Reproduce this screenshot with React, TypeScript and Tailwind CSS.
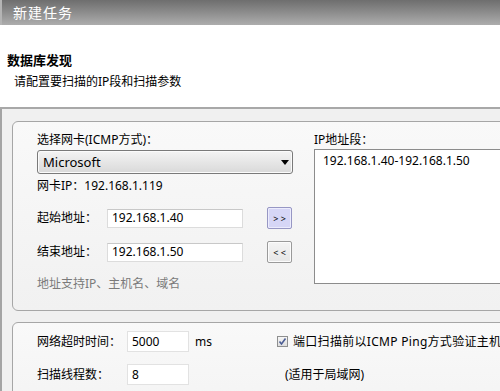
export default function App() {
  return (
    <div className="w-[500px] h-[391px] overflow-hidden bg-[#f0f0f0] font-['Noto_Sans','Noto_Sans_CJK_SC',sans-serif] text-[12px] leading-[16px] text-black flex flex-col">
      {/* 标题栏 */}
      <div className="h-[25px] shrink-0 bg-gradient-to-b from-[#6e6e6e] to-[#adadad] border-l-2 border-[#b4b4b4] flex items-center pl-[11px]">
        <span className="text-white text-[14px] tracking-[1px]">新建任务</span>
      </div>

      {/* 页头 */}
      <div className="h-[84px] shrink-0 bg-white border-b-2 border-[#a8a8a8] pt-[26px] pl-[7px]">
        <div className="text-[13px] leading-[18px] font-bold">数据库发现</div>
        <div className="mt-[5px] pl-[7px]">请配置要扫描的IP段和扫描参数</div>
      </div>

      <div className="flex-1 border-l-2 border-[#a4a4a4] pt-[12px] flex flex-col gap-[11px]">
        {/* IP 设置 */}
        <div className="ml-[10px] w-[520px] h-[190px] shrink-0 rounded-[6px] border border-[#a6a6a6] bg-gradient-to-b from-[#f9f9f9] to-[#f1f1f1] pl-[24px] pt-[10px] flex">
          <div className="w-[256px] shrink-0 flex flex-col">
            <div>选择网卡(ICMP方式)：</div>
            <div className="mt-[2px] h-[24px] rounded-[3px] border border-[#7a7a7a] bg-gradient-to-b from-[#f4f4f4] to-[#d9d9d9] shadow-[inset_0_0_0_1px_#fbfbfb] flex items-center justify-between pl-[5px] pr-[3px]">
              <span className="text-[13px]">Microsoft</span>
              <svg width="8" height="5" viewBox="0 0 8 5">
                <path d="M0 0H8L4 5Z" fill="#000" />
              </svg>
            </div>
            <div className="mt-[4px]">网卡IP：192.168.1.119</div>

            <div className="mt-[13px] h-[22px] flex items-center">
              <span className="w-[70px] shrink-0">起始地址：</span>
              <div className="w-[136px] h-[19px] shrink-0 bg-white border border-[#dcdcdc] border-t-[#c8c8c8] flex items-center pl-[4px]">
                192.168.1.40
              </div>
              <button className="ml-[24px] w-[25px] h-[22px] shrink-0 rounded-[2px] border border-[#9797c4] bg-[#d6d6f6] shadow-[inset_0_0_0_1px_#ececfd] text-[9px] leading-none flex items-center justify-center">
                &gt; &gt;
              </button>
            </div>

            <div className="mt-[12px] h-[22px] flex items-center">
              <span className="w-[70px] shrink-0">结束地址：</span>
              <div className="w-[136px] h-[19px] shrink-0 bg-white border border-[#dcdcdc] border-t-[#c8c8c8] flex items-center pl-[4px]">
                192.168.1.50
              </div>
              <button className="ml-[24px] w-[25px] h-[22px] shrink-0 rounded-[2px] border border-[#9a9a9a] bg-gradient-to-b from-[#f4f4f4] to-[#e6e6e6] shadow-[inset_0_0_0_1px_#fcfcfc] text-[9px] leading-none flex items-center justify-center">
                &lt; &lt;
              </button>
            </div>

            <div className="mt-[13px] text-[#7a7a7a]">地址支持IP、主机名、域名</div>
          </div>

          <div className="ml-[21px] shrink-0 flex flex-col">
            <div>IP地址段：</div>
            <div className="mt-[1px] w-[200px] h-[135px] bg-white border border-[#8c8c8c] pl-[8px] pt-[3px]">
              192.168.1.40-192.168.1.50
            </div>
          </div>
        </div>

        {/* 扫描参数 */}
        <div className="ml-[10px] w-[520px] h-[100px] shrink-0 rounded-[6px] border border-[#a6a6a6] bg-gradient-to-b from-[#f9f9f9] to-[#f3f3f3] pl-[24px] pt-[8px] flex flex-col gap-[12px]">
          <div className="h-[21px] flex items-center">
            <span className="w-[90px] shrink-0">网络超时时间：</span>
            <div className="w-[62px] h-[21px] shrink-0 bg-white border border-[#e2e2e2] flex items-center pl-[4px]">5000</div>
            <span className="ml-[6px] w-[82px] shrink-0">ms</span>
            <span className="w-[11px] h-[11px] shrink-0 border border-[#8e8f8f] bg-gradient-to-b from-[#f6f6f6] to-[#dedede] flex items-center justify-center">
              <svg width="9" height="9" viewBox="0 0 9 9">
                <path d="M1.5 4.5L3.5 7L7.5 1.5" stroke="#4b5d94" strokeWidth="1.6" fill="none" />
              </svg>
            </span>
            <span className="ml-[5px] shrink-0 whitespace-nowrap tracking-[0.3px]">端口扫描前以ICMP Ping方式验证主机是否存活</span>
          </div>
          <div className="h-[21px] flex items-center">
            <span className="w-[90px] shrink-0">扫描线程数：</span>
            <div className="w-[62px] h-[21px] shrink-0 bg-white border border-[#e2e2e2] flex items-center pl-[4px]">8</div>
            <span className="ml-[96px] shrink-0">(适用于局域网)</span>
          </div>
        </div>
      </div>
    </div>
  );
}
